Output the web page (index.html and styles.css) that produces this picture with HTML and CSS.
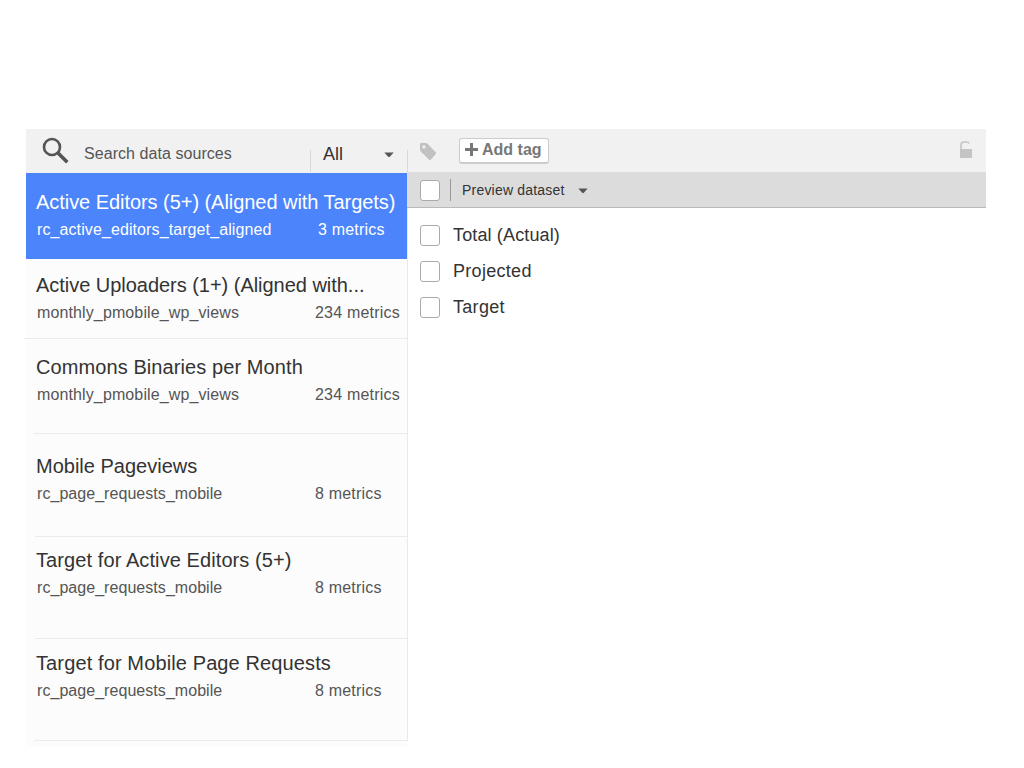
FILE: index.html
```html
<!DOCTYPE html>
<html lang="en">
<head>
<meta charset="utf-8">
<title>Data sources</title>
<link rel="stylesheet" href="styles.css">
</head>
<body>
<main class="app">
  <aside class="sidebar">
    <header class="search">
      <svg class="search-icon" width="28" height="28" viewBox="0 0 28 28"><circle cx="10" cy="10" r="8" fill="none" stroke="#555" stroke-width="2.6"/><path d="M15.8 15.8L25.3 25.2" stroke="#555" stroke-width="3.6"/></svg>
      <span class="search-text"><span class="t-search">Search data sources</span></span>
      <div class="filter"><span class="t-all">All</span><svg width="10" height="6" viewBox="0 0 10 6"><path d="M0.3 0.4H9.7L5.8 4.8Q5 5.6 4.2 4.8Z" fill="#555"/></svg></div>
    </header>
    <ul class="sources">
      <li class="source selected"><div class="title t1">Active Editors (5+) (Aligned with Targets)</div><div class="meta"><span class="m1">rc_active_editors_target_aligned</span><span class="count">3 metrics</span></div></li>
      <li class="source second"><div class="title t2">Active Uploaders (1+) (Aligned with...</div><div class="meta"><span class="m2">monthly_pmobile_wp_views</span><span class="count">234 metrics</span></div></li>
      <li class="source third"><div class="title t3">Commons Binaries per Month</div><div class="meta"><span class="m2">monthly_pmobile_wp_views</span><span class="count">234 metrics</span></div></li>
      <li class="source fourth"><div class="title t4">Mobile Pageviews</div><div class="meta"><span class="m3">rc_page_requests_mobile</span><span class="count">8 metrics</span></div></li>
      <li class="source fifth"><div class="title t5">Target for Active Editors (5+)</div><div class="meta"><span class="m3">rc_page_requests_mobile</span><span class="count">8 metrics</span></div></li>
      <li class="source sixth"><div class="title t6">Target for Mobile Page Requests</div><div class="meta"><span class="m3">rc_page_requests_mobile</span><span class="count">8 metrics</span></div></li>
    </ul>
  </aside>
  <section class="detail">
    <header class="tags">
      <svg class="tag-icon" width="18" height="18" viewBox="0 0 18 18"><path fill="#c1c1c1" fill-rule="evenodd" d="M0 1.4Q0 0 1.4 0H5.8Q6.8 0 7.5 .7L15.7 9.3Q16.5 10.2 15.7 11.1L10.8 16.7Q10 17.5 9.1 16.7L.8 8.6Q0 7.8 0 6.8ZM4 2.2A1.7 1.7 0 1 0 4 5.6A1.7 1.7 0 1 0 4 2.2Z"/></svg>
      <button class="add-tag"><svg width="13" height="13" viewBox="0 0 13 13"><path d="M6.5 0V13M0 6.5H13" stroke="#777" stroke-width="3"/></svg><span class="t-add">Add tag</span></button>
      <svg class="lock-icon" width="12" height="17" viewBox="0 0 12 17"><path d="M1 9V4.5Q1 1 4 1H6.5Q8.6 1 9.2 2.5" fill="none" stroke="#c4c4c4" stroke-width="1.6"/><path d="M0 8H12V17H0Z" fill="#c4c4c4"/></svg>
    </header>
    <div class="preview"><span class="box"></span><span class="divider"></span><span class="t-preview">Preview dataset</span><svg width="10" height="6" viewBox="0 0 10 6"><path d="M0.3 0.4H9.7L5.8 4.8Q5 5.6 4.2 4.8Z" fill="#555"/></svg></div>
    <ul class="metrics">
      <li><span class="box"></span><span class="p1">Total (Actual)</span></li>
      <li><span class="box"></span><span class="p2">Projected</span></li>
      <li><span class="box"></span><span class="p3">Target</span></li>
    </ul>
  </section>
</main>
</body>
</html>
```
FILE: styles.css
```css
* { box-sizing: border-box; }
body { margin: 0; background: #fff; color: #333; font-family: "Liberation Sans", Arial, sans-serif; white-space: nowrap; }
ul { margin: 0; padding: 0; list-style: none; }
svg { display: block; flex: none; }
.app { display: flex; width: 960px; margin: 129px 0 0 26px; }
.sidebar { width: 382px; height: 618px; background: #fcfcfc; flex: none; }
.search { display: flex; height: 44px; background: #f1f1f1; color: #555; }
.search-icon { margin: 8px 0 0 16px; }
.search-text { width: 240px; padding: 15px 0 0 14px; font-size: 16px; line-height: 20px; letter-spacing: .06px; }
.filter { display: flex; width: 98px; height: 22px; margin-top: 21px; padding: 0 13px 0 12px; border: solid #d9d9d9; border-width: 0 1px; justify-content: space-between; align-items: flex-start; font-size: 18px; line-height: 8px; color: #333; }
.filter svg { margin-top: 2px; }
.sources { width: 382px; height: 568px; border-right: 1px solid #e9e9e9; }
.source { padding-left: 10px; }
.selected { height: 86px; padding-top: 17px; background: #4b84fb; color: #fff; width: 381px; }
.source + .source { border-bottom: 1px solid #ebebeb; }
.second { height: 80px; padding-top: 14px; margin-left: -2px; }
.source.second { padding-left: 12px; }
.third { height: 95px; padding-top: 16px; }
.fourth { height: 103px; padding-top: 20px; }
.fifth { height: 102px; padding-top: 11px; }
.sixth { height: 102px; padding-top: 12px; }
.third, .fourth, .fifth, .sixth { margin-left: 9px; }
.third, .sixth { margin-left: 8px; }
.source.third, .source.sixth { padding-left: 2px; }
.source.fourth, .source.fifth { padding-left: 1px; }
.title { font-size: 20px; line-height: 24px; }
.t1 { letter-spacing: -.05px; }
.t2 { letter-spacing: -.03px; }
.t3 { letter-spacing: .09px; }
.t5 { letter-spacing: .09px; }
.t6 { letter-spacing: .12px; }
.m1 { letter-spacing: .1px; }
.m2 { letter-spacing: .12px; }
.m3 { letter-spacing: .05px; }
.count { letter-spacing: .2px; }
.p1 { letter-spacing: .14px; }
.p2, .p3 { letter-spacing: .3px; }
.meta { display: grid; grid-template-columns: 278px auto; margin: 6px 0 0 1px; font-size: 16px; line-height: 20px; color: #555; }
.meta span { justify-self: start; }
.selected .meta { color: #fff; grid-template-columns: 281px auto; }
.detail { flex: 1; }
.tags { display: flex; align-items: flex-start; height: 43px; padding: 0 14px 0 12px; background: #f1f1f1; }
.tag-icon { margin-top: 14px; }
.add-tag { display: flex; gap: 4px; width: 90px; height: 26px; margin: 9px 0 0 21px; padding: 4px 0 0 5px; border: 1px solid #ccc; border-bottom-width: 2px; border-radius: 3px; background: #fff; color: #777; font: bold 16px/14px "Liberation Sans", Arial, sans-serif; }
.lock-icon { margin: 12px 0 0 auto; }
.preview { display: flex; align-items: center; height: 36px; margin-left: -1px; padding-left: 13px; background: #dcdcdc; border-bottom: 1px solid #b9b9b9; font-size: 14px; }
.t-preview { letter-spacing: .2px; }
.preview .box { margin-top: 2px; }
.box { width: 20px; height: 21px; flex: none; border: 1px solid #aaa; border-radius: 3px; background: #fff; }
.divider { width: 1px; height: 22px; margin: 1px 11px 0 10px; background: #999; }
.preview svg { margin: 2px 0 0 13px; }
.metrics { padding: 9px 0 0 12px; font-size: 18px; }
.metrics li { display: flex; align-items: center; height: 36px; gap: 13px; }
```
